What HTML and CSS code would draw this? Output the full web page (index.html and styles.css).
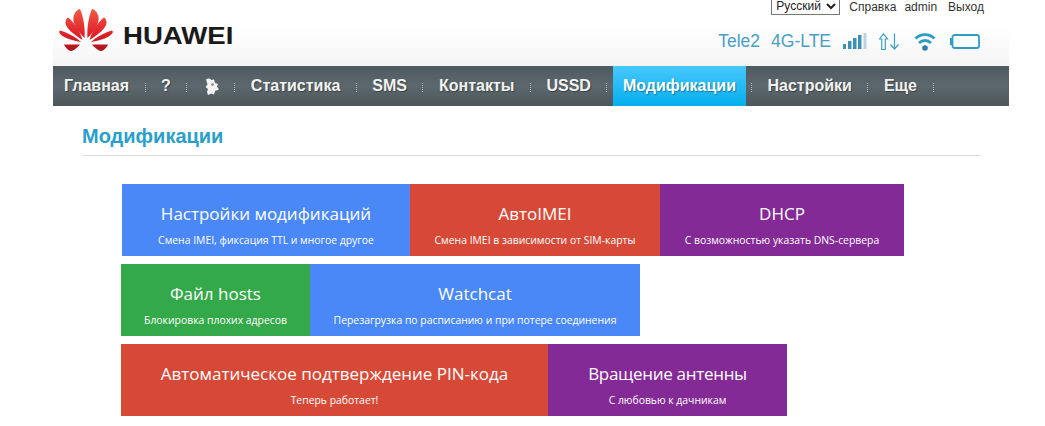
FILE: index.html
```html
<!DOCTYPE html>
<html lang="ru">
<head>
    <meta charset="UTF-8">
    <title>Модификации</title>
    <link rel="stylesheet" href="styles.css">
</head>
<body>
    <div class="page">
        <div class="top-links">
            <select class="lang"><option>Русский</option></select>
            <a class="help-link">Справка</a>
            <a>admin</a>
            <a>Выход</a>
        </div>
        <div class="header">
            <div class="logo">
                <svg class="logo-mark" width="54" height="42" viewBox="0 0 54 42">
                    <defs>
                        <linearGradient id="petal" gradientUnits="userSpaceOnUse" x1="0" y1="0" x2="0" y2="42">
                            <stop offset="0" stop-color="#ee5a45"/>
                            <stop offset="0.55" stop-color="#e3242b"/>
                            <stop offset="1" stop-color="#a9141c"/>
                        </linearGradient>
                        <g id="petals" fill="url(#petal)">
                            <path d="M25.500 29C18 22 13.500 14 14.500 8C15.500 3 19 0 21 0C23.500 5 26.500 18 25.500 29Z"/>
                            <path d="M23.500 31C14 25 7 19 6.500 14C6.500 11 7.500 9.500 9 8.500C14 12 21 22 23.500 31Z"/>
                            <path d="M22 33C12 31 3 28.500 0.500 24C0 23 0 22.500 1 21.500C7 23 17 28 22 33Z"/>
                            <path d="M21 35.500L5 35.500C6 38 9 41.500 12 42C15 41.500 19 38 21 35.500Z"/>
                        </g>
                    </defs>
                    <use href="#petals"/>
                    <use href="#petals" transform="matrix(-1 0 0 1 54 0)"/>
                </svg>
                <span class="logo-text">HUAWEI</span>
            </div>
            <div class="status">
                <span class="status-text">Tele2</span>
                <span class="status-text">4G-LTE</span>
                <svg class="icon signal" width="24" height="16" viewBox="0 0 24 16">
                    <rect x="0" y="11" width="3" height="5" fill="#3d8fb5"/>
                    <rect x="5" y="8" width="3.500" height="8" fill="#3d8fb5"/>
                    <rect x="10" y="5" width="3.500" height="11" fill="#3d8fb5"/>
                    <rect x="15" y="2" width="3.500" height="14" fill="#3d8fb5"/>
                    <rect x="20.500" y="0" width="3" height="16" fill="#bcd3df"/>
                </svg>
                <svg class="icon" width="21" height="17" viewBox="0 0 21 17" fill="none" stroke="#3d9fc4" stroke-width="1.200">
                    <path d="M4.500 0.800L8.500 6H6.300V16.500H2.700V6H0.500Z" fill="#fff"/>
                    <path d="M15.500 0.500V15.500M11.500 11.500L15.500 16L19.500 11.500"/>
                </svg>
                <svg class="icon" width="22" height="19" viewBox="0 0 22 19" fill="none" stroke="#2f9cc6" stroke-width="2.800">
                    <path d="M1.500 6.500a13.500 13.500 0 0 1 19 0"/>
                    <path d="M5 11a8.500 8.500 0 0 1 12 0"/>
                    <circle cx="11" cy="16" r="2.800" fill="#2f7fa5" stroke="none"/>
                </svg>
                <svg class="icon battery" width="30" height="15" viewBox="0 0 30 15" fill="none">
                    <rect x="2.500" y="1" width="26.500" height="13" rx="2" fill="#f8fdff" stroke="#2f9cc6" stroke-width="1.800"/>
                    <rect x="0" y="4" width="2.500" height="7" fill="#2f9cc6"/>
                </svg>
            </div>
        </div>
        <nav class="nav">
            <a>Главная</a>
            <i class="sep"></i>
            <a>?</a>
            <i class="sep"></i>
            <a class="nav-icon">
                <svg width="14" height="17" viewBox="0 0 14 17" fill="#f4f4f4">
                    <path d="M1 1.500c2-1.500 4-1 5.500.5l2.500-.5 1 3.500 3 1-1 2.500 2 3-4 1.500-1 3.500-3-1-3 1.500-1-3 1-3-2.500-2 2-2.500z"/>
                    <circle cx="7.500" cy="6.500" r="1.300" fill="#7b8589"/>
                </svg>
            </a>
            <i class="sep"></i>
            <a>Статистика</a>
            <i class="sep"></i>
            <a>SMS</a>
            <i class="sep"></i>
            <a>Контакты</a>
            <i class="sep"></i>
            <a>USSD</a>
            <i class="sep"></i>
            <a class="active">Модификации</a>
            <i class="sep"></i>
            <a>Настройки</a>
            <i class="sep"></i>
            <a>Еще</a>
            <i class="sep"></i>
        </nav>
        <div class="content">
            <h1 class="title">Модификации</h1>
            <div class="tiles">
                <div class="row row-first">
                    <div class="tile blue w288"><h2>Настройки модификаций</h2><p>Смена IMEI, фиксация TTL и многое другое</p></div>
                    <div class="tile red w250"><h2>АвтоIMEI</h2><p>Смена IMEI в зависимости от SIM-карты</p></div>
                    <div class="tile purple w244"><h2>DHCP</h2><p>С возможностью указать DNS-сервера</p></div>
                </div>
                <div class="row">
                    <div class="tile green w189"><h2>Файл hosts</h2><p>Блокировка плохих адресов</p></div>
                    <div class="tile blue w330"><h2>Watchcat</h2><p>Перезагрузка по расписанию и при потере соединения</p></div>
                </div>
                <div class="row">
                    <div class="tile red w427"><h2>Автоматическое подтверждение PIN-кода</h2><p>Теперь работает!</p></div>
                    <div class="tile purple w239"><h2 class="narrow">Вращение антенны</h2><p>С любовью к дачникам</p></div>
                </div>
            </div>
        </div>
    </div>
</body>
</html>
```

FILE: styles.css
```css
body {
    margin: 0;
    background: #fff;
    font-family: "Liberation Sans", Arial, sans-serif;
}
.page {
    width: 956px;
    margin-left: 53px;
}
.top-links {
    display: flex;
    justify-content: flex-end;
    align-items: center;
    height: 14px;
    gap: 11px;
    padding-right: 25px;
    font-size: 12px;
    color: #333;
}
.lang {
    height: 18px;
    width: 69px;
    margin: -3px -2px 0 0;
    padding: 0;
    font-family: "Liberation Sans", Arial, sans-serif;
    font-size: 12px;
    color: #222;
    background: #fff;
    border: 1px solid #777;
    border-radius: 0;
}
.help-link {
    margin-right: -3px;
}
.header {
    display: flex;
    justify-content: space-between;
    height: 52px;
    background: linear-gradient(#fff 20%, #f5f5f5);
}
.logo {
    display: flex;
    align-items: center;
    height: 44px;
    margin-left: 6px;
    margin-top: -6px;
}
.logo-mark {
    flex: none;
}
.logo-text {
    margin: 13px 0 0 10px;
    font-size: 23px;
    font-weight: bold;
    color: #1a1a1a;
    transform: scaleX(1.2);
    transform-origin: left;
}
.status {
    display: flex;
    align-items: center;
    height: 22px;
    margin-top: 16px;
    padding-right: 29px;
}
.status-text {
    margin-right: 11px;
    font-size: 17.500px;
    color: #4a9fc4;
}
.icon {
    margin-left: 1px;
    margin-right: 13px;
}
.signal {
    margin-right: 11px;
}
.battery {
    margin-right: 0;
}
.nav {
    display: flex;
    align-items: stretch;
    height: 40px;
    padding-left: 11px;
    background: linear-gradient(#4f5a60, #5c686d 50%, #4d575b);
}
.nav a {
    display: flex;
    align-items: center;
    font-size: 16px;
    font-weight: bold;
    color: #f2f2f2;
    text-shadow: 1px 1px 1px rgba(0, 0, 0, 0.35);
}
.nav .nav-icon {
    padding-left: 2px;
}
.nav .active {
    padding: 0 10px;
    margin-left: -10px;
    color: #fff;
    background: linear-gradient(#48c8fb, #05aef0);
}
.sep {
    align-self: center;
    width: 1px;
    height: 9px;
    margin: 2px 15.500px 0;
    background: repeating-linear-gradient(#aab2b5 0 1px, transparent 1px 2px);
}
.nav .active + .sep {
    margin-left: 5px;
}
.content {
    padding: 0 28px 0 29px;
}
.title {
    margin: 0;
    padding: 19px 0 7px;
    font-size: 20px;
    line-height: 23px;
    font-weight: bold;
    color: #2b9fca;
    border-bottom: 1px solid #dcdcdc;
}
.tiles {
    display: flex;
    flex-direction: column;
    gap: 8px;
    margin-top: 28px;
    margin-left: 39px;
}
.row {
    display: flex;
}
.row-first {
    margin-left: 1px;
}
.tile {
    box-sizing: border-box;
    height: 72px;
    padding-top: 18px;
    text-align: center;
    color: #fff;
    font-family: "Open Sans", sans-serif;
}
.tile h2 {
    margin: 0;
    font-size: 17px;
    line-height: 23px;
    font-weight: 400;
}
.tile .narrow {
    letter-spacing: -0.300px;
}
.tile p {
    margin: 8px 0 0;
    font-size: 10.400px;
    line-height: 14px;
}
.blue { background: #4a88f7; }
.red { background: #d74937; }
.purple { background: #842a96; }
.green { background: #34a94a; }
.w288 { width: 288px; }
.w250 { width: 250px; }
.w244 { width: 244px; }
.w189 { width: 189px; }
.w330 { width: 330px; }
.w427 { width: 427px; }
.w239 { width: 239px; }
```
